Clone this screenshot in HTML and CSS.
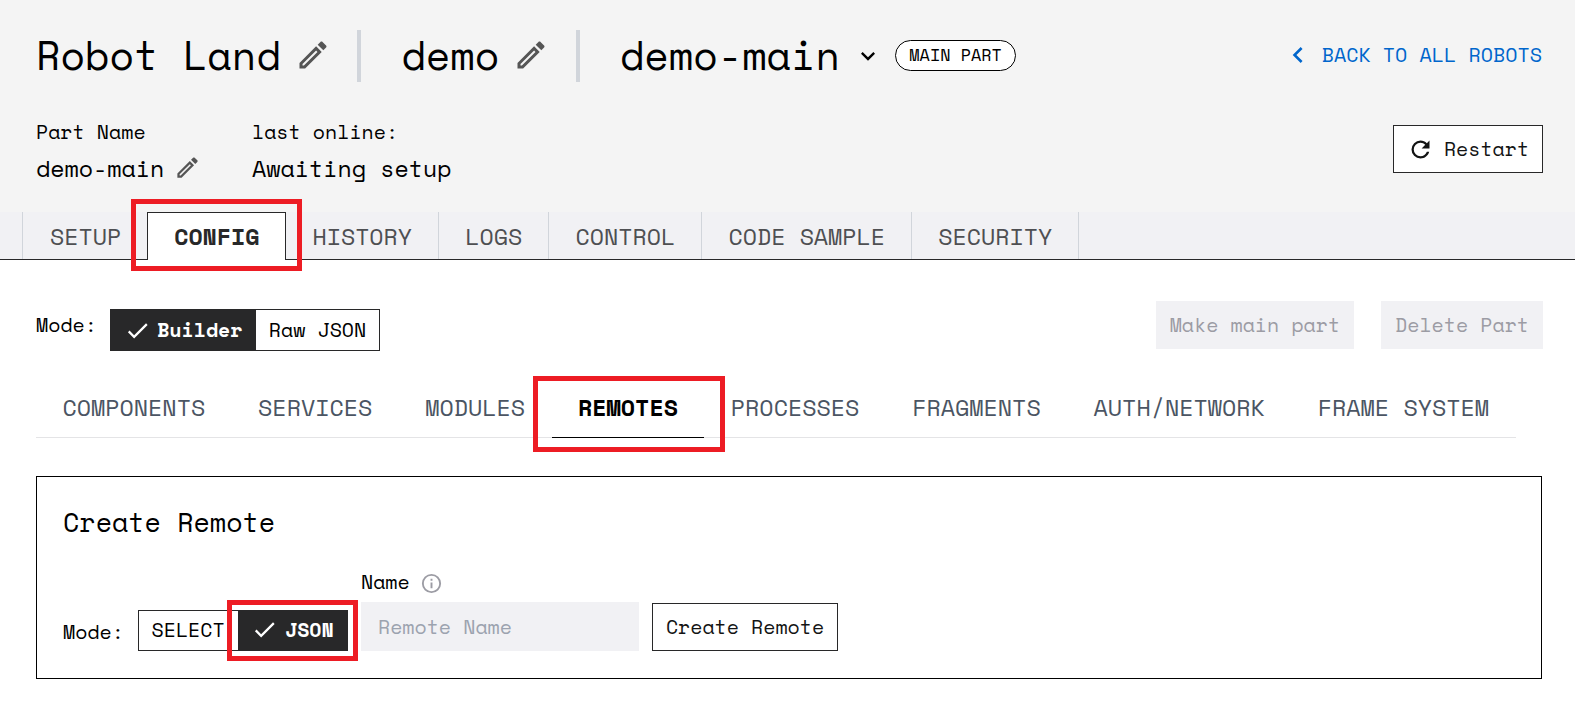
FILE: index.html
```html
<!DOCTYPE html>
<html lang="en">
<head>
<meta charset="utf-8">
<title>Robot Land</title>
<link rel="stylesheet" href="styles.css">
</head>
<body>
<svg class="sprite" aria-hidden="true">
  <symbol id="pencil" viewBox="0 0 24 24"><path d="M14.06,9L15,9.94L5.92,19H5V18.08L14.06,9M17.66,3C17.41,3 17.15,3.1 16.96,3.29L15.13,5.12L18.88,8.87L20.71,7.04C21.1,6.65 21.1,6 20.71,5.63L18.37,3.29C18.17,3.09 17.92,3 17.66,3M14.06,6.19L3,17.25V21H6.75L17.81,9.94L14.06,6.19Z"/></symbol>
  <symbol id="check" viewBox="0 0 24 24"><path d="M21,7L9,19L3.5,13.5L4.91,12.09L9,16.17L19.59,5.59L21,7Z"/></symbol>
</svg>

<header class="header">
  <div class="title-row">
    <h1 class="title">Robot Land</h1>
    <svg class="icon pencil-lg"><use href="#pencil"/></svg>
    <span class="divider"></span>
    <h1 class="title">demo</h1>
    <svg class="icon pencil-lg"><use href="#pencil"/></svg>
    <span class="divider"></span>
    <h1 class="title">demo-main</h1>
    <svg class="icon chevron-down" viewBox="0 0 24 24"><path d="M7.41,8.58L12,13.17L16.59,8.58L18,10L12,16L6,10L7.41,8.58Z"/></svg>
    <span class="badge">MAIN PART</span>
    <a class="back"><svg class="icon chevron-left" viewBox="0 0 24 24"><path d="M15.41,16.58L10.83,12L15.41,7.41L14,6L8,12L14,18L15.41,16.58Z"/></svg>BACK TO ALL ROBOTS</a>
  </div>
  <div class="meta-row">
    <div class="meta part">
      <span class="label">Part Name</span>
      <span class="value">demo-main<svg class="icon pencil-sm"><use href="#pencil"/></svg></span>
    </div>
    <div class="meta">
      <span class="label">last online:</span>
      <span class="value">Awaiting setup</span>
    </div>
    <button class="button restart"><svg class="icon refresh" viewBox="0 0 24 24"><path d="M17.65,6.35C16.2,4.9 14.21,4 12,4A8,8 0 0,0 4,12A8,8 0 0,0 12,20C15.73,20 18.84,17.45 19.73,14H17.65C16.83,16.33 14.61,18 12,18A6,6 0 0,1 6,12A6,6 0 0,1 12,6C13.66,6 15.14,6.69 16.22,7.78L13,11H20V4L17.65,6.35Z"/></svg>Restart</button>
  </div>
</header>

<nav class="tabs">
  <a class="tab">SETUP</a>
  <a class="tab tab-active">CONFIG<span class="highlight highlight-config"></span></a>
  <a class="tab tab-after">HISTORY</a>
  <a class="tab">LOGS</a>
  <a class="tab">CONTROL</a>
  <a class="tab">CODE SAMPLE</a>
  <a class="tab">SECURITY</a>
</nav>

<main class="main">
  <div class="mode-row">
    <span class="mode-label">Mode:</span>
    <div class="toggle">
      <span class="option option-on"><svg class="icon check"><use href="#check"/></svg>Builder</span>
      <span class="option">Raw JSON</span>
    </div>
    <div class="actions">
      <button class="button disabled">Make main part</button>
      <button class="button disabled">Delete Part</button>
    </div>
  </div>

  <nav class="subtabs">
    <a class="subtab">COMPONENTS</a>
    <a class="subtab">SERVICES</a>
    <a class="subtab">MODULES</a>
    <a class="subtab subtab-active">REMOTES<span class="highlight highlight-remotes"></span></a>
    <a class="subtab">PROCESSES</a>
    <a class="subtab">FRAGMENTS</a>
    <a class="subtab">AUTH/NETWORK</a>
    <a class="subtab">FRAME SYSTEM</a>
  </nav>

  <section class="card">
    <h2 class="card-title">Create Remote</h2>
    <div class="form">
      <span class="form-label">Mode:</span>
      <div class="toggle form-toggle">
        <span class="option option-select">SELECT</span>
        <span class="option option-on option-json"><svg class="icon check"><use href="#check"/></svg>JSON<span class="highlight highlight-json"></span></span>
      </div>
      <div class="field">
        <span class="field-label">Name<svg class="icon info" viewBox="0 0 24 24"><path d="M11,9H13V7H11M12,20C7.59,20 4,16.41 4,12C4,7.59 7.59,4 12,4C16.41,4 20,7.59 20,12C20,16.41 16.41,20 12,20M12,2A10,10 0 0,0 2,12A10,10 0 0,0 12,22A10,10 0 0,0 22,12A10,10 0 0,0 12,2M11,17H13V11H11V17Z"/></svg></span>
        <input class="input" type="text" placeholder="Remote Name">
      </div>
      <button class="button create">Create Remote</button>
    </div>
  </section>
</main>
</body>
</html>
```

FILE: styles.css
```css
* { box-sizing: border-box; }

body {
  margin: 0;
  background: #fff;
  color: #000;
  font: 19.9px/28px "Space Mono", "DejaVu Sans Mono", monospace;
  white-space: nowrap;
}

h1, h2 { margin: 0; font-weight: 400; }
.sprite { display: none; }
.icon { display: block; flex: none; fill: currentColor; }

.header {
  height: 212px;
  padding: 30px 32px 0 36px;
  background: #f4f4f4;
}
.title-row { display: flex; align-items: center; height: 52px; }
.title { height: 52px; font-size: 40px; line-height: 50px; }
.pencil-lg { width: 36px; height: 36px; margin: 0 26.5px 0 14px; color: #555; position: relative; top: -1px; }
.divider { width: 4px; height: 52px; margin-right: 40px; background: #d1d5db; }
.chevron-down { width: 28px; height: 28px; margin: 0 13px 0 14px; }
.badge {
  width: 121px;
  height: 31px;
  margin-top: -1px;
  border: 1px solid #000;
  border-radius: 16px;
  background: #fff;
  font-size: 16.8px;
  line-height: 28px;
  text-align: center;
}
.back { display: flex; align-items: center; height: 28px; margin: -2px 0 0 auto; color: #0066cc; font-size: 20px; }
.chevron-left { width: 32px; height: 32px; margin-right: 8px; }
.back { padding-right: 1px; }

.meta-row { display: flex; margin-top: 36px; }
.meta { display: flex; flex-direction: column; gap: 8px; }
.part { width: 216px; }
.value { display: flex; align-items: center; font-size: 23.3px; }
.pencil-sm { width: 27px; height: 27px; margin-left: 10px; color: #555; position: relative; top: -1px; }

.button {
  display: flex;
  align-items: center;
  justify-content: center;
  height: 48px;
  padding: 0;
  border: 1px solid #282829;
  background: #fff;
  color: #131414;
  font: inherit;
}
.restart { width: 150px; margin: 7px 0 0 auto; }
.refresh { width: 27px; height: 27px; margin-right: 10px; }

.tabs {
  display: flex;
  height: 48px;
  padding-left: 22px;
  border-bottom: 1px solid #282829;
  background: #f1f1f4;
}
.tab {
  height: 47px;
  padding: 0 26px 0 26.3px;
  border-right: 1px solid #d1d5db;
  color: #4e4f52;
  font-size: 23.26px;
  line-height: 49px;
}
.tab:first-child { padding-left: 27px; border-left: 1px solid #d1d5db; border-right: 0; }
.tab-active {
  position: relative;
  width: 139px;
  height: 48px;
  padding: 0 0 0 26px;
  border: 1px solid #282829;
  border-bottom: 0;
  background: #fff;
  color: #282829;
  font-weight: 700;
  line-height: 47px;
}

.highlight { position: absolute; border: 5px solid #ed1c24; pointer-events: none; }
.highlight-config { left: -17px; top: -14px; width: 171px; height: 72px; }
.highlight-remotes { left: -19px; top: -4px; width: 192px; height: 76px; }
.highlight-json { left: -11px; top: -11px; width: 131px; height: 61px; }

.main { padding: 41px 32px 0 36px; }
.mode-row { display: flex; height: 79px; }
.mode-label { width: 74px; padding-top: 10px; }
.toggle { display: flex; height: 42px; margin-top: 8px; border: 1px solid #282829; }
.option { display: flex; align-items: center; padding: 0 13.2px; }
.option-on { background: #282829; color: #fff; font-weight: 700; }
.check { width: 27px; height: 27px; margin-right: 6px; }
.actions { display: flex; gap: 27px; margin-left: auto; }
.disabled { padding: 0 14px; border: 0; background: #f1f1f4; color: #9c9ca4; }

.subtabs { display: flex; width: 1480px; height: 58px; border-bottom: 1px solid #e4e4e6; }
.subtab { padding: 0 26.45px; height: 58px; color: #4b5563; font-size: 23.33px; line-height: 55px; }
.subtab-active { position: relative; border-bottom: 1px solid #000; color: #000; font-weight: 700; }

.card {
  width: 1506px;
  height: 203px;
  margin-top: 38px;
  padding: 30px 26px 0;
  border: 1px solid #000;
}
.card-title { font-size: 26.67px; line-height: 31px; }
.form { display: flex; align-items: flex-end; height: 113px; }
.form-label { width: 75px; padding-bottom: 5px; }
.form-toggle { width: 210px; height: 41px; margin: 0 13px 0 0; }
.option-select { width: 99px; padding: 0 0 2px 12.6px; }
.option-json { position: relative; flex: 1; padding: 0 0 2px 13px; }
.option-json .check { margin-right: 7px; }
.field-label { display: flex; align-items: center; height: 28px; }
.info { width: 23px; height: 23px; margin: 2px 0 0 10px; color: #9c9ca4; }
.input {
  display: block;
  width: 278px;
  height: 49px;
  margin-top: 6px;
  padding: 0 17px;
  border: 0;
  background: #f1f1f4;
  font: inherit;
}
.input::placeholder { color: #9ca3af; }
.create { width: 186px; margin-left: 13px; }
```
